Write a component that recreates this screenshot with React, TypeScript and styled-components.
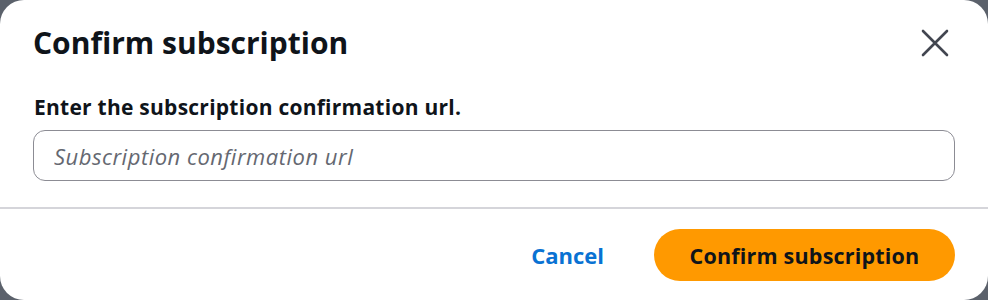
import React from 'react'
import styled, { createGlobalStyle } from 'styled-components'

const GlobalStyle = createGlobalStyle`
  html, body {
    margin: 0;
    padding: 0;
    background: #5b616b;
  }
  body {
    font-family: "Open Sans", "Noto Sans", sans-serif;
  }
`

const Dialog = styled.div`
  box-sizing: border-box;
  width: 988px;
  height: 300px;
  background: #ffffff;
  border-radius: 24px;
  display: flex;
  flex-direction: column;
  overflow: hidden;
`

const Header = styled.div`
  display: flex;
  align-items: center;
  justify-content: space-between;
  padding: 25px 37px 0 33px;
`

const Title = styled.h2`
  margin: 0;
  font-size: 30px;
  line-height: 36px;
  font-weight: 700;
  color: #0f141a;
`

const CloseButton = styled.button`
  border: none;
  background: none;
  padding: 0;
  width: 32px;
  height: 32px;
  display: flex;
  align-items: center;
  justify-content: center;
  color: #424650;
  cursor: pointer;
`

const Body = styled.div`
  padding: 33px 33px 26px 33px;
  display: flex;
  flex-direction: column;
  gap: 10px;
`

const Label = styled.label`
  padding-left: 1px;
  font-size: 21px;
  line-height: 26px;
  font-weight: 700;
  color: #0f141a;
  letter-spacing: 0.25px;
`

const Input = styled.input`
  box-sizing: border-box;
  width: 100%;
  height: 51px;
  margin: 0;
  border: 1.5px solid #8c8c94;
  border-radius: 12px;
  padding: 0 20px;
  font-family: "Open Sans", "Noto Sans", sans-serif;
  font-size: 22px;
  letter-spacing: 0.5px;
  color: #0f141a;
  outline: none;

  &::placeholder {
    color: #656871;
    font-style: italic;
  }
`

const Divider = styled.hr`
  margin: 0;
  border: none;
  border-top: 2px solid #d5d5da;
`

const Footer = styled.div`
  display: flex;
  justify-content: flex-end;
  align-items: center;
  gap: 50px;
  padding: 20px 33px 0 0;
`

const LinkButton = styled.button`
  border: none;
  background: none;
  padding: 0;
  font-family: inherit;
  font-size: 22px;
  font-weight: 700;
  color: #0972d3;
  cursor: pointer;
`

const PrimaryButton = styled.button`
  border: none;
  background: #ff9900;
  border-radius: 26px;
  width: 301px;
  height: 52px;
  font-family: inherit;
  font-size: 21.5px;
  letter-spacing: 0.2px;
  font-weight: 700;
  color: #0f141a;
  cursor: pointer;
`

export default function App() {
  return (
    <>
      <GlobalStyle />
      <Dialog role="dialog" aria-labelledby="confirm-title">
        <Header>
          <Title id="confirm-title">Confirm subscription</Title>
          <CloseButton aria-label="Close">
            <svg width="28" height="28" viewBox="0 0 28 28" fill="none">
              <path d="M2 2L26 26M26 2L2 26" stroke="currentColor" strokeWidth="2.6" strokeLinecap="round" />
            </svg>
          </CloseButton>
        </Header>
        <Body>
          <Label htmlFor="url">Enter the subscription confirmation url.</Label>
          <Input id="url" placeholder="Subscription confirmation url" />
        </Body>
        <Divider />
        <Footer>
          <LinkButton>Cancel</LinkButton>
          <PrimaryButton>Confirm subscription</PrimaryButton>
        </Footer>
      </Dialog>
    </>
  )
}
